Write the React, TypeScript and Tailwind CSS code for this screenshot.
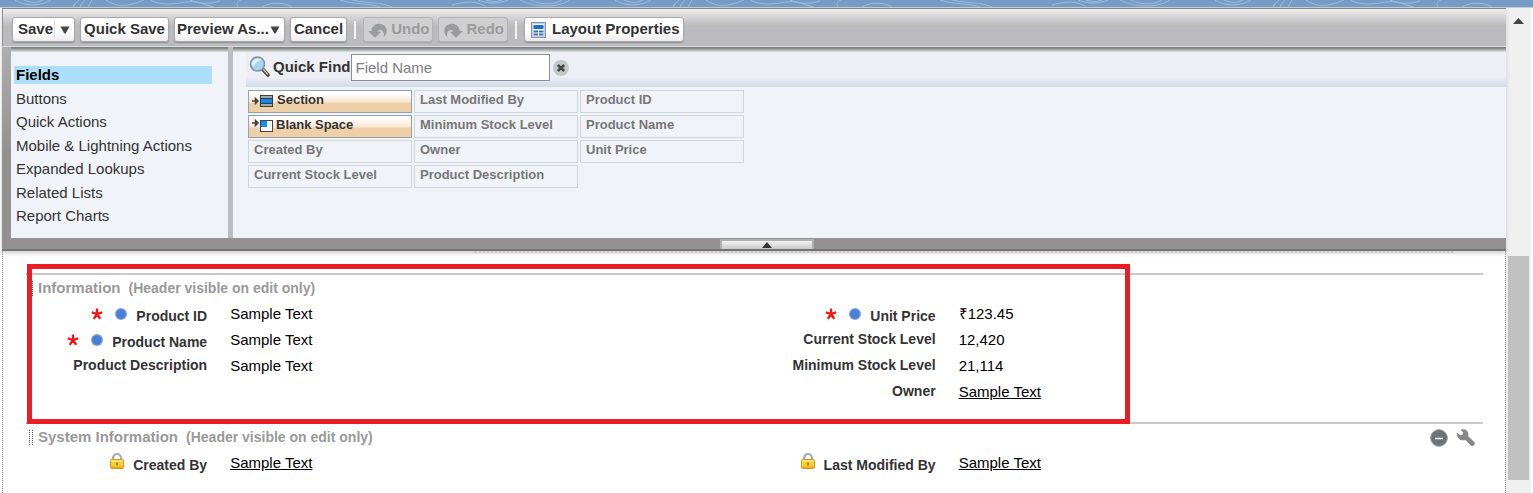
import React from "react";

const fields = [
  "Created By",
  "Current Stock Level",
  "Last Modified By",
  "Minimum Stock Level",
  "Owner",
  "Product Description",
  "Product ID",
  "Product Name",
  "Unit Price",
];

const categories = [
  "Fields",
  "Buttons",
  "Quick Actions",
  "Mobile & Lightning Actions",
  "Expanded Lookups",
  "Related Lists",
  "Report Charts",
];

const buttonBase =
  "flex h-[25px] items-center rounded-[3px] border text-[15px] font-bold whitespace-nowrap";
const buttonOn =
  "border-[#a9a9ab] bg-linear-to-b from-white from-50% to-[#ededed] text-[#333] shadow-[0_1px_1px_#8f8f91]";
const buttonOff = "border-[#b3b3b5] bg-[#cfcfd0] text-[#9b9b9b] shadow-[0_1px_0_#a5a5a7]";

function Caret() {
  return (
    <svg className="h-2 w-[10px] shrink-0" viewBox="0 0 10 8" aria-hidden="true">
      <path d="M0.5 0.5h9L5.6 7.5h-1.2z" fill="#444" />
    </svg>
  );
}

function Separator() {
  return <span className="mx-[2px] h-[18px] w-[2px] bg-[#f3f3f3]" />;
}

function UndoIcon({ flip = false }: { flip?: boolean }) {
  return (
    <svg
      className={flip ? "h-4 w-5 -scale-x-100" : "h-4 w-5"}
      viewBox="0 0 20 16"
      aria-hidden="true"
    >
      <path
        d="M0 9h3.200C3.800 4.500 7 1.800 11 1.800c5 0 8.400 3.800 7.600 8.200-.3 2-1.300 3.600-2.800 4.800.7-4-.8-6.900-3.600-6.900-1.300 0-2.200.6-2.500 1.600l3.300.5-6 5.700z"
        fill="#999b9c"
      />
    </svg>
  );
}

function PropertiesIcon() {
  return (
    <svg className="h-4 w-[15px]" viewBox="0 0 15 16" aria-hidden="true">
      <rect x="0.5" y="0.5" width="14" height="15" fill="#c5d2df" stroke="#8492a3" />
      <rect x="2" y="2" width="11" height="12" fill="#f6f9fc" />
      <rect x="2.500" y="3" width="10" height="4" fill="#1c6fc9" />
      <path
        d="M2.500 8.500h4.500v2H2.500zM8 8.500h4.500v2H8zM2.500 11.500h4.500v2H2.500zM8 11.500h4.500v2H8z"
        fill="#3a74b8"
      />
    </svg>
  );
}

function SearchIcon() {
  return (
    <svg className="h-[22px] w-[22px]" viewBox="0 0 22 22" aria-hidden="true">
      <path d="M13.500 13l5.500 6" stroke="#4d4540" strokeWidth="3.600" strokeLinecap="round" />
      <path d="M14.500 13.500l4 4.500" stroke="#c9b9a5" strokeWidth="1.600" strokeLinecap="round" />
      <circle cx="8.500" cy="8" r="7" fill="#a9d5ef" stroke="#7d93a6" strokeWidth="1.600" />
      <path d="M3 8.500C3 4.800 5.500 3 8.500 2.800c2 0 3.400.8 4.200 1.800C8.700 4.500 6 6.500 4.500 11z" fill="#e6f5fd" />
    </svg>
  );
}

function SectionIcon() {
  return (
    <svg className="h-[14px] w-[22px]" viewBox="0 0 22 14" aria-hidden="true">
      <path d="M0 7h4M3.500 4.500v5L6 7z" stroke="#444" strokeWidth="1.500" fill="#444" />
      <rect x="8.500" y="1.500" width="12" height="11" fill="#a9aaa8" stroke="#3d3d3d" />
      <rect x="8.500" y="4.500" width="12" height="5" fill="#1687e2" stroke="#24405c" />
    </svg>
  );
}

function BlankIcon() {
  return (
    <svg className="h-[14px] w-[22px]" viewBox="0 0 22 14" aria-hidden="true">
      <path d="M0 4h4M3.500 1.500v5L6 4z" stroke="#444" strokeWidth="1.500" fill="#444" />
      <rect x="8.500" y="1.500" width="12" height="11" fill="#f5f5fa" stroke="#444" />
      <rect x="9" y="2" width="6" height="6" fill="#0f8ff2" />
    </svg>
  );
}

function RequiredMark() {
  return (
    <svg className="h-3 w-3" viewBox="0 0 12 12" role="img" aria-label="Required">
      <path
        d="M6 6V0.500M6 6 .8 4.300M6 6l5.200-1.700M6 6 2.800 10.800M6 6l3.200 4.800"
        stroke="#f51414"
        strokeWidth="2.300"
      />
    </svg>
  );
}

function AlwaysDot() {
  return (
    <svg className="mr-[9px] ml-3 h-3 w-3" viewBox="0 0 12 12" role="img" aria-label="Always on layout">
      <circle cx="6" cy="6" r="6" fill="#7ba6e4" />
      <circle cx="6" cy="6" r="4.800" fill="#4a7fd3" />
    </svg>
  );
}

function LockIcon() {
  return (
    <svg className="mr-[9px] h-4 w-[14px]" viewBox="0 0 14 16" role="img" aria-label="Read only">
      <path d="M3 8V5a4 4 0 0 1 8 0v3" fill="none" stroke="#a9adb0" strokeWidth="2.200" />
      <rect x="0.500" y="6.500" width="13" height="9" rx="1" fill="#f8cf2c" stroke="#d9981c" />
      <path d="M1 7.500h12V9H1z" fill="#fde98a" />
      <path d="M1 13.500h12V15H1z" fill="#e9a826" />
      <path d="M6.200 9.500h1.600v3H6.200z" fill="#a26b10" />
    </svg>
  );
}

function Grip() {
  return (
    <svg className="h-4 w-1" viewBox="0 0 4 16" aria-hidden="true">
      <path d="M0.500 0v16M3.500 0v16" stroke="#555" strokeDasharray="1 1" />
    </svg>
  );
}

type RowData = { label: string; value: string; kind?: "required" | "locked"; link?: boolean };

function Row({ label, value, kind, link }: RowData) {
  return (
    <div className="flex h-[26px] text-[15px] leading-[20px] text-black">
      <dt className="flex w-1/4 shrink-0 items-start justify-end pr-px text-[14px] leading-[18px] font-bold whitespace-nowrap text-[#333]">
        {kind === "required" && (
          <span className="flex pt-1">
            <RequiredMark />
            <AlwaysDot />
          </span>
        )}
        {kind === "locked" && <LockIcon />}
        <span className={kind ? "pt-[3px]" : ""}>{label}</span>
      </dt>
      <dd className="pl-[22px]">
        {link ? (
          <a href="#record" className="underline">
            {value}
          </a>
        ) : (
          value
        )}
      </dd>
    </div>
  );
}

function LayoutSection({
  title,
  left,
  right,
  tools,
}: {
  title: string;
  left: RowData[];
  right: RowData[];
  tools?: boolean;
}) {
  return (
    <section className="border-t-2 border-[#c9c9c9]">
      <header className="mb-[2px] flex h-[27px] items-center pl-[3px] text-[#999]">
        <Grip />
        <h2 className="pl-[5px] text-[15px] font-bold">{title}</h2>
        <span className="pl-2 text-[14px] font-bold">(Header visible on edit only)</span>
        {tools && (
          <span className="ml-auto flex items-center gap-[9px] pr-2">
            <button type="button" aria-label="Remove section">
              <svg className="h-[18px] w-[18px]" viewBox="0 0 18 18" aria-hidden="true">
                <circle cx="9" cy="9" r="8.300" fill="#6d7275" stroke="#8f9496" />
                <path d="M5 9.500h8" stroke="#f2f2f2" strokeWidth="1.600" />
              </svg>
            </button>
            <button type="button" aria-label="Section properties">
              <svg className="h-[18px] w-[18px]" viewBox="0 0 18 18" aria-hidden="true">
                <path
                  d="M3.500 1C7-.8 11 1 11.400 5c0 .9 0 1.500-.3 2.200l6 5.600c2 2.200-.9 5.400-3.400 3.600L8.600 11C5 12.200.8 10.400 0 6.200L.2 4l3.300 2.300 2.200-.7.300-2.300z"
                  fill="#858789"
                />
              </svg>
            </button>
          </span>
        )}
      </header>
      <div className="grid grid-cols-2">
        <dl>
          {left.map((r) => (
            <Row key={r.label} {...r} />
          ))}
        </dl>
        <dl>
          {right.map((r) => (
            <Row key={r.label} {...r} />
          ))}
        </dl>
      </div>
    </section>
  );
}

function Banner() {
  return (
    <svg className="block h-[7px] w-full bg-[#759bc6]" aria-hidden="true">
      <defs>
        <pattern id="contours" width="600" height="7" patternUnits="userSpaceOnUse">
          <g fill="none" stroke="#9dbbdc" strokeWidth="1">
            <path d="M15 0c8 6 25 7 36 0M24 0c6 3 14 3 19 0M73 7c1-3 4-5 6-7M80 7c1-3 3-5 5-7M88 7l4-7M106 0c12 9 26 5 38 0M150 0c12 6 24 4 36 2s20 4 28 5M190 0c8 3 18 5 30 1M238 7c-2-4 0-6 3-7M262 7c8-5 22-5 30 0M340 0c14 5 30 3 40 7M352 0c12 3 30 2 40 7M452 5c14-4 26-4 34 2M478 0c10 4 20 4 30 0M486 0c6 2 12 2 16 0M520 0c16 8 38 8 50 0M530 0c12 5 24 5 32 0" />
          </g>
        </pattern>
      </defs>
      <rect width="100%" height="7" fill="url(#contours)" />
    </svg>
  );
}

export default function App() {
  const tile = "flex h-[23px] items-start border text-[13px] leading-[18px] font-bold whitespace-nowrap";
  const paletteItem =
    "border-[#98a0a8] bg-linear-to-b from-[#fffdfa] from-15% via-[#f9e7d1] via-50% to-[#edd0a8] to-60% pl-[3px] text-[#333]";
  const panelEdge = "h-[5px] bg-linear-to-b from-[#7d8282] from-20% to-[#dfe4e5]";
  return (
    <div className="flex h-screen flex-col overflow-hidden bg-white font-['Liberation_Sans',Arial,sans-serif]">
      <Banner />
      <div className="flex min-h-0 flex-1 border-t border-[#c4cbd3] pr-[2px] pl-[2px]">
        <div className="flex min-w-0 flex-1 flex-col">
          <div className="relative z-10 border-t border-b-2 border-t-[#858587] border-b-[#737373] bg-linear-to-b from-[#b8b8ba] to-[#949192] to-60% shadow-[0_2px_4px_#ccc]">
            <div className="flex h-[38px] items-center gap-[5px] border-b border-l border-b-[#dcdcdd] border-l-[#929294] bg-linear-to-b from-[#eee] to-[#bbbbbd] to-45% pt-1 pl-[9px]">
              <div className={`${buttonBase} ${buttonOn}`}>
                <button type="button" className="pr-px pl-[5px]">
                  Save
                </button>
                <button
                  type="button"
                  aria-label="More save options"
                  className="border-l border-[#ddd] py-[5px] pr-1 pl-[5px]"
                >
                  <Caret />
                </button>
              </div>
              <button type="button" className={`${buttonBase} ${buttonOn} px-[3px]`}>
                Quick Save
              </button>
              <button type="button" className={`${buttonBase} ${buttonOn} gap-px pr-1 pl-[2px]`}>
                Preview As...
                <Caret />
              </button>
              <button type="button" className={`${buttonBase} ${buttonOn} px-[3px]`}>
                Cancel
              </button>
              <Separator />
              <button type="button" disabled className={`${buttonBase} ${buttonOff} gap-[3px] pr-[3px] pl-[4px]`}>
                <UndoIcon />
                Undo
              </button>
              <button type="button" disabled className={`${buttonBase} ${buttonOff} gap-[3px] pr-[3px] pl-[4px]`}>
                <UndoIcon flip />
                Redo
              </button>
              <Separator />
              <button type="button" className={`${buttonBase} ${buttonOn} gap-[6px] pr-[3px] pl-[6px]`}>
                <PropertiesIcon />
                Layout Properties
              </button>
            </div>
            <div className="pb-[11px] pl-[9px]">
              <div className="flex gap-[5px] bg-[#bcbdc1]">
                <nav className="w-[217px] shrink-0 bg-[#f0f4f8]">
                  <div className={panelEdge} />
                  <ul className="mt-[14px] mb-[13px] ml-[3px] flex h-[159px] w-[198px] flex-col justify-between text-[15px] leading-[18px] text-[#333]">
                    {categories.map((c, i) => (
                      <li key={c} className={i === 0 ? "bg-[#aedff9] font-bold text-black" : ""}>
                        <a href="#palette" className="block pl-[2px] whitespace-nowrap">
                          {c}
                        </a>
                      </li>
                    ))}
                  </ul>
                </nav>
                <div className="min-w-0 flex-1 bg-[#f0f4f8]">
                  <div className={panelEdge} />
                  <div className="ml-[13px] flex h-[35px] items-start bg-linear-to-b from-[#edeff4] from-70% to-[#d4dce8] pt-[2px] pl-[3px]">
                    <span className="pt-[2px]">
                      <SearchIcon />
                    </span>
                    <label
                      htmlFor="quick-find"
                      className="pl-[2px] text-[15px] leading-[26px] font-bold whitespace-nowrap text-[#333]"
                    >
                      Quick Find
                    </label>
                    <input
                      id="quick-find"
                      type="text"
                      placeholder="Field Name"
                      className="h-[27px] w-[199px] border border-[#8d9094] bg-white px-1 text-[15px] outline-none placeholder:text-[#808080]"
                    />
                    <button type="button" aria-label="Clear" className="mt-[6px] ml-[3px]">
                      <svg className="h-4 w-4" viewBox="0 0 16 16" aria-hidden="true">
                        <circle cx="8" cy="8" r="8" fill="#c5c8ca" />
                        <path d="M4.800 5l6.400 6M11.200 5l-6.400 6" stroke="#484848" strokeWidth="2.600" />
                      </svg>
                    </button>
                  </div>
                  <div className="ml-[15px] grid w-max grid-flow-col grid-cols-[repeat(3,164px)] grid-rows-4 gap-[2px] pt-[3px]">
                    <div className={`${tile} ${paletteItem}`}>
                      <span className="pt-[3px] pr-[3px]">
                        <SectionIcon />
                      </span>
                      Section
                    </div>
                    <div className={`${tile} ${paletteItem}`}>
                      <span className="pt-[3px] pr-[2px]">
                        <BlankIcon />
                      </span>
                      Blank Space
                    </div>
                    {fields.map((f) => (
                      <div key={f} className={`${tile} border-[#cfd7da] pl-[5px] text-[#777]`}>
                        {f}
                      </div>
                    ))}
                  </div>
                </div>
              </div>
            </div>
            <button
              type="button"
              aria-label="Collapse palette"
              className="absolute bottom-0 left-[calc(50%-34px)] flex h-[10px] w-[94px] items-center justify-center border-x-2 border-t-2 border-[#b0b0b0] bg-linear-to-b from-[#f3f3f3] to-[#c9c9c9]"
            >
              <svg className="h-[6px] w-[10px]" viewBox="0 0 10 6" aria-hidden="true">
                <path d="M5 0l5 6H0z" fill="#333" />
              </svg>
            </button>
          </div>
          <main className="min-h-0 flex-1 border-x border-dotted border-[#888] pr-[22px] pl-[23px]">
            <div className="mr-[30px] mb-5 ml-[448px] border-t-2 border-dotted border-[#bbb]" />
            <div className="relative">
              <div className="h-[149px]">
                <LayoutSection
                  title="Information"
                  left={[
                    { label: "Product ID", value: "Sample Text", kind: "required" },
                    { label: "Product Name", value: "Sample Text", kind: "required" },
                    { label: "Product Description", value: "Sample Text" },
                  ]}
                  right={[
                    { label: "Unit Price", value: "₹123.45", kind: "required" },
                    { label: "Current Stock Level", value: "12,420" },
                    { label: "Minimum Stock Level", value: "21,114" },
                    { label: "Owner", value: "Sample Text", link: true },
                  ]}
                />
              </div>
              <div className="pointer-events-none absolute -top-[9px] left-px h-[160px] w-[1103px] border-5 border-[#eb1c24]" />
            </div>
            <LayoutSection
              title="System Information"
              tools
              left={[{ label: "Created By", value: "Sample Text", kind: "locked", link: true }]}
              right={[{ label: "Last Modified By", value: "Sample Text", kind: "locked", link: true }]}
            />
          </main>
        </div>
        <div className="flex w-[25px] shrink-0 flex-col items-center bg-[#f0f0f0] pt-[10px]" aria-hidden="true">
          <svg className="h-[6px] w-[11px]" viewBox="0 0 11 6">
            <path d="M5.500 0l5.500 6H0z" fill="#444" />
          </svg>
          <div className="mt-[232px] h-[224px] w-[21px] bg-[#c1c1c1]" />
        </div>
      </div>
    </div>
  );
}
